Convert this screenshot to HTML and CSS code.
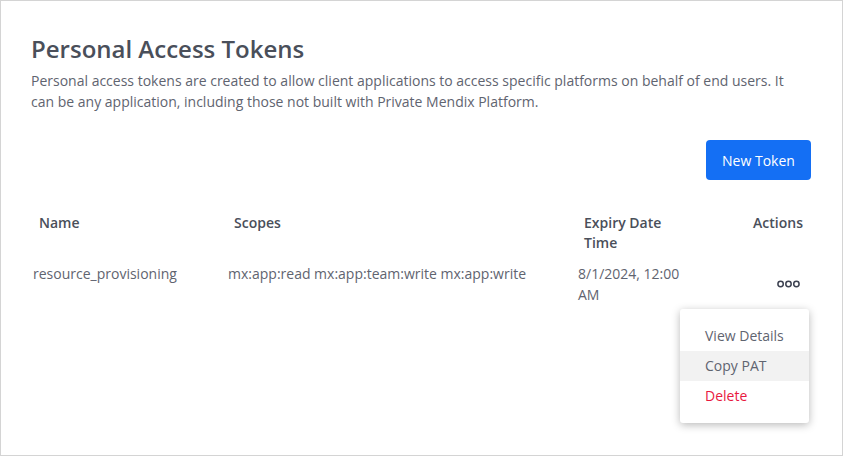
FILE: index.html
```html
<!DOCTYPE html>
<html lang="en">
<head>
<meta charset="utf-8">
<title>Personal Access Tokens</title>
<link rel="stylesheet" href="styles.css">
</head>
<body>
<div class="frame">
  <main class="page">
    <h1 class="title">Personal Access Tokens</h1>
    <p class="desc">Personal access tokens are created to allow client applications to access specific platforms on behalf of end users. It can be any application, including those not built with Private Mendix Platform.</p>
    <div class="toolbar">
      <button class="btn-primary" type="button">New Token</button>
    </div>
    <div class="table">
      <div class="th">Name</div>
      <div class="th">Scopes</div>
      <div class="th">Expiry Date Time</div>
      <div class="th th-actions">Actions</div>

      <div class="td">resource_provisioning</div>
      <div class="td">mx:app:read mx:app:team:write mx:app:write</div>
      <div class="td">8/1/2024, 12:00 AM</div>
      <div class="td td-actions">
        <button class="more" type="button" aria-label="More actions">
          <svg width="23" height="8" viewBox="0 0 23 8"><circle cx="3.6" cy="4" r="2.7" fill="none" stroke="#3c4150" stroke-width="1.5"/><circle cx="11.5" cy="4" r="2.7" fill="none" stroke="#3c4150" stroke-width="1.5"/><circle cx="19.4" cy="4" r="2.7" fill="none" stroke="#3c4150" stroke-width="1.5"/></svg>
        </button>
        <ul class="menu">
          <li class="menu-item">View Details</li>
          <li class="menu-item is-hover">Copy PAT</li>
          <li class="menu-item danger">Delete</li>
        </ul>
      </div>
    </div>
  </main>
</div>
</body>
</html>
```
FILE: styles.css
```css
* { box-sizing: border-box; }
html, body { margin: 0; padding: 0; }
body {
  font-family: "Open Sans", "Noto Sans", sans-serif;
  color: #4a4f5a;
  background: #fff;
}
.frame {
  width: 843px;
  height: 456px;
  border: 1px solid #d4d4d4;
  overflow: hidden;
}
.page {
  padding: 31px 31px 0 30px;
}
.title {
  margin: 0;
  font-size: 24px;
  font-weight: 600;
  line-height: 34px;
  color: #4a4f5a;
}
.desc {
  max-width: 772px;
  margin: 4px 0 0 0;
  font-size: 14px;
  line-height: 21px;
  color: #5f6470;
}
.toolbar {
  display: flex;
  justify-content: flex-end;
  margin-top: 28px;
}
.btn-primary {
  width: 105px;
  height: 40px;
  border: 0;
  border-radius: 4px;
  background: #146ff4;
  color: #fff;
  font-family: inherit;
  font-size: 14px;
  font-weight: 500;
  cursor: pointer;
}
.table {
  display: grid;
  grid-template-columns: 195px 350px 120px 115px;
  margin-top: 23px;
}
.th {
  padding: 10px 8px 4px 8px;
  font-size: 14px;
  font-weight: 600;
  line-height: 20px;
  color: #4a4f5a;
}
.th-actions { text-align: right; }
.td {
  padding: 6px 10px 10px 2px;
  font-size: 14px;
  line-height: 21px;
  color: #5f6470;
}
.td-actions {
  position: relative;
  display: flex;
  justify-content: flex-end;
  align-items: center;
  padding-right: 11px;
}
.more {
  border: 0;
  background: transparent;
  padding: 0;
  width: 23px;
  height: 8px;
  display: flex;
  cursor: pointer;
}
.menu {
  position: absolute;
  top: 52px;
  right: 2px;
  width: 129px;
  margin: 0;
  padding: 12px 0;
  list-style: none;
  background: #fff;
  border-radius: 3px;
  box-shadow: 0 2px 8px rgba(0, 0, 0, 0.28);
}
.menu-item {
  height: 30px;
  padding-left: 25px;
  font-size: 14px;
  line-height: 30px;
  color: #5f6470;
}
.menu-item.is-hover { background: #f2f2f2; }
.menu-item.danger { color: #e8193f; }
```
